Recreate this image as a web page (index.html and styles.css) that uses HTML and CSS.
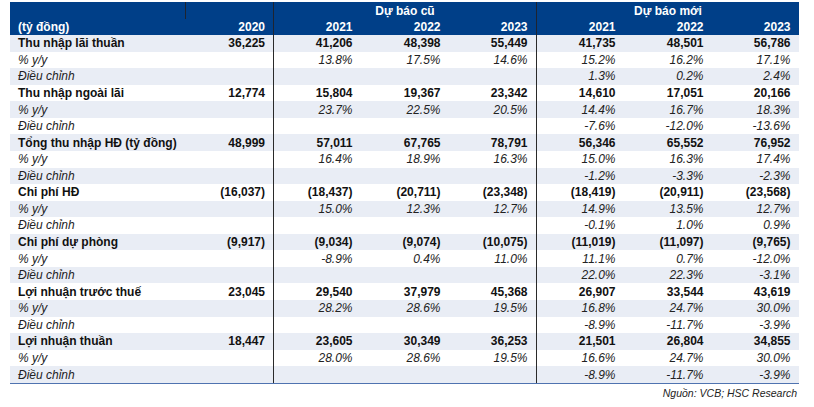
FILE: index.html
```html
<!DOCTYPE html>
<html lang="vi">
<head>
<meta charset="utf-8">
<link rel="stylesheet" href="styles.css">
</head>
<body>
<div class="wrap">
  <div class="head">
    <div class="hc"></div>
    <div class="hc sep"></div>
    <div class="hc group span3 sep">Dự báo cũ</div>
    <div class="hc group span3 sep">Dự báo mới</div>
    <div class="hc label">(tỷ đồng)</div>
    <div class="hc num n0">2020</div>
    <div class="hc num sep">2021</div>
    <div class="hc num">2022</div>
    <div class="hc num">2023</div>
    <div class="hc num sep">2021</div>
    <div class="hc num">2022</div>
    <div class="hc num">2023</div>
  </div>
  <div class="body">
    <div class="row main"><div class="c label">Thu nhập lãi thuần</div><div class="c n0">36,225</div><div class="c sep">41,206</div><div class="c">48,398</div><div class="c">55,449</div><div class="c sep">41,735</div><div class="c">48,501</div><div class="c">56,786</div></div>
    <div class="row sub"><div class="c label">% y/y</div><div class="c n0"></div><div class="c sep">13.8%</div><div class="c">17.5%</div><div class="c">14.6%</div><div class="c sep">15.2%</div><div class="c">16.2%</div><div class="c">17.1%</div></div>
    <div class="row sub"><div class="c label">Điều chỉnh</div><div class="c n0"></div><div class="c sep"></div><div class="c"></div><div class="c"></div><div class="c sep">1.3%</div><div class="c">0.2%</div><div class="c">2.4%</div></div>

    <div class="row main"><div class="c label">Thu nhập ngoài lãi</div><div class="c n0">12,774</div><div class="c sep">15,804</div><div class="c">19,367</div><div class="c">23,342</div><div class="c sep">14,610</div><div class="c">17,051</div><div class="c">20,166</div></div>
    <div class="row sub"><div class="c label">% y/y</div><div class="c n0"></div><div class="c sep">23.7%</div><div class="c">22.5%</div><div class="c">20.5%</div><div class="c sep">14.4%</div><div class="c">16.7%</div><div class="c">18.3%</div></div>
    <div class="row sub"><div class="c label">Điều chỉnh</div><div class="c n0"></div><div class="c sep"></div><div class="c"></div><div class="c"></div><div class="c sep">-7.6%</div><div class="c">-12.0%</div><div class="c">-13.6%</div></div>

    <div class="row main"><div class="c label">Tổng thu nhập HĐ (tỷ đồng)</div><div class="c n0">48,999</div><div class="c sep">57,011</div><div class="c">67,765</div><div class="c">78,791</div><div class="c sep">56,346</div><div class="c">65,552</div><div class="c">76,952</div></div>
    <div class="row sub"><div class="c label">% y/y</div><div class="c n0"></div><div class="c sep">16.4%</div><div class="c">18.9%</div><div class="c">16.3%</div><div class="c sep">15.0%</div><div class="c">16.3%</div><div class="c">17.4%</div></div>
    <div class="row sub"><div class="c label">Điều chỉnh</div><div class="c n0"></div><div class="c sep"></div><div class="c"></div><div class="c"></div><div class="c sep">-1.2%</div><div class="c">-3.3%</div><div class="c">-2.3%</div></div>

    <div class="row main"><div class="c label">Chi phí HĐ</div><div class="c n0">(16,037)</div><div class="c sep">(18,437)</div><div class="c">(20,711)</div><div class="c">(23,348)</div><div class="c sep">(18,419)</div><div class="c">(20,911)</div><div class="c">(23,568)</div></div>
    <div class="row sub"><div class="c label">% y/y</div><div class="c n0"></div><div class="c sep">15.0%</div><div class="c">12.3%</div><div class="c">12.7%</div><div class="c sep">14.9%</div><div class="c">13.5%</div><div class="c">12.7%</div></div>
    <div class="row sub"><div class="c label">Điều chỉnh</div><div class="c n0"></div><div class="c sep"></div><div class="c"></div><div class="c"></div><div class="c sep">-0.1%</div><div class="c">1.0%</div><div class="c">0.9%</div></div>

    <div class="row main"><div class="c label">Chi phí dự phòng</div><div class="c n0">(9,917)</div><div class="c sep">(9,034)</div><div class="c">(9,074)</div><div class="c">(10,075)</div><div class="c sep">(11,019)</div><div class="c">(11,097)</div><div class="c">(9,765)</div></div>
    <div class="row sub"><div class="c label">% y/y</div><div class="c n0"></div><div class="c sep">-8.9%</div><div class="c">0.4%</div><div class="c">11.0%</div><div class="c sep">11.1%</div><div class="c">0.7%</div><div class="c">-12.0%</div></div>
    <div class="row sub"><div class="c label">Điều chỉnh</div><div class="c n0"></div><div class="c sep"></div><div class="c"></div><div class="c"></div><div class="c sep">22.0%</div><div class="c">22.3%</div><div class="c">-3.1%</div></div>

    <div class="row main"><div class="c label">Lợi nhuận trước thuế</div><div class="c n0">23,045</div><div class="c sep">29,540</div><div class="c">37,979</div><div class="c">45,368</div><div class="c sep">26,907</div><div class="c">33,544</div><div class="c">43,619</div></div>
    <div class="row sub"><div class="c label">% y/y</div><div class="c n0"></div><div class="c sep">28.2%</div><div class="c">28.6%</div><div class="c">19.5%</div><div class="c sep">16.8%</div><div class="c">24.7%</div><div class="c">30.0%</div></div>
    <div class="row sub"><div class="c label">Điều chỉnh</div><div class="c n0"></div><div class="c sep"></div><div class="c"></div><div class="c"></div><div class="c sep">-8.9%</div><div class="c">-11.7%</div><div class="c">-3.9%</div></div>

    <div class="row main"><div class="c label">Lợi nhuận thuần</div><div class="c n0">18,447</div><div class="c sep">23,605</div><div class="c">30,349</div><div class="c">36,253</div><div class="c sep">21,501</div><div class="c">26,804</div><div class="c">34,855</div></div>
    <div class="row sub"><div class="c label">% y/y</div><div class="c n0"></div><div class="c sep">28.0%</div><div class="c">28.6%</div><div class="c">19.5%</div><div class="c sep">16.6%</div><div class="c">24.7%</div><div class="c">30.0%</div></div>
    <div class="row sub"><div class="c label">Điều chỉnh</div><div class="c n0"></div><div class="c sep"></div><div class="c"></div><div class="c"></div><div class="c sep">-8.9%</div><div class="c">-11.7%</div><div class="c">-3.9%</div></div>
  </div>
  <div class="source">Nguồn: VCB; HSC Research</div>
</div>
</body>
</html>
```
FILE: styles.css
```css
* { box-sizing: border-box; }
html, body { margin: 0; padding: 0; background: #fff; }
body {
  font-family: "Liberation Sans", Arial, sans-serif;
  font-size: 12px;
  color: #1a1a1a;
}
.wrap {
  width: 799px;
  padding: 2px 0 0 10px;
}

/* header */
.head {
  display: grid;
  grid-template-columns: 175px 88px 88px 88px 87px 88px 88px 87px;
  grid-template-rows: 16.5px 16.5px;
  background: #003f88;
  color: #fff;
  font-weight: bold;
}
.hc { display: flex; align-items: center; }
.hc.span3 { grid-column: span 3; }
.hc.group { justify-content: center; padding-top: 1px; }
.hc.label { padding-left: 8px; }
.hc.num { justify-content: flex-end; padding-right: 8.5px; }
.hc.n0 { padding-right: 8px; }
.hc.sep { border-left: 1px solid #1e2430; }

/* body */
.body { border-bottom: 1px solid #4f73b0; }
.row {
  display: grid;
  grid-template-columns: 175px 88px 88px 88px 87px 88px 88px 87px;
  height: 16.57px;
}
.row:nth-child(odd) { background: #e9edf5; }
.c {
  display: flex;
  align-items: center;
  justify-content: flex-end;
  padding-right: 8.5px;
  white-space: nowrap;
}
.c.label { justify-content: flex-start; padding-left: 8px; padding-right: 0; }
.c.n0 { padding-right: 8px; }
.c.sep { border-left: 1px solid #2a2a2a; }
.row.main { font-weight: bold; color: #111; }
.row.sub { font-style: italic; color: #222; }

.source {
  text-align: right;
  font-style: italic;
  font-size: 10.5px;
  padding-right: 2px;
  margin-top: 3px;
  color: #222;
}
```
